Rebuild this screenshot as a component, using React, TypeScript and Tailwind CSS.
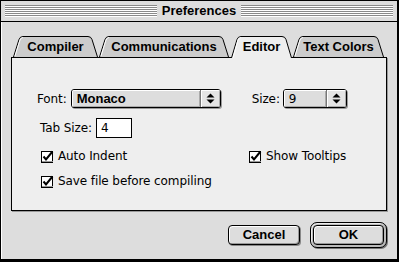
import React from "react";

const bold = "font-['Liberation_Sans',Arial,sans-serif] font-bold text-[13px] text-black";
const plain = "font-['DejaVu_Sans',Verdana,sans-serif] text-[12px] tracking-[-0.1px] text-black";

function Tab({ label, w, box, selected }: { label: string; w: number; box: string; selected?: boolean }) {
  const d = `M0.5,${selected ? 23 : 22} L6,4.5 Q7,1.5 10,1.5 L${w - 10},1.5 Q${w - 7},1.5 ${w - 6},4.5 L${w - 0.5},${selected ? 23 : 22}`;
  return (
    <div className={`relative h-[22px] flex items-center justify-center pt-[1px] ${box} ${selected ? "z-10" : ""}`}>
      <svg className="absolute left-0 top-0 overflow-visible" width={w} height={23}>
        <path d={d} fill={selected ? "#eeeeee" : "#cccccc"} stroke="none" />
        <path d={d} fill="none" stroke="#000" strokeWidth={1} />
        <path d={`M2,${selected ? 23 : 21} L7,5 Q8,2.5 10,2.5`} fill="none" stroke="#fff" strokeWidth={1} />
      </svg>
      <span className={`relative ${bold}`}>{label}</span>
    </div>
  );
}

function Arrows() {
  return (
    <svg width="9" height="11" viewBox="0 0 9 11">
      <path d="M4.5,0.5 L8.5,4.5 L0.5,4.5 Z" fill="#000" />
      <path d="M0.5,6.5 L8.5,6.5 L4.5,10.5 Z" fill="#000" />
    </svg>
  );
}

function Popup({ value, box, valueClass }: { value: string; box: string; valueClass: string }) {
  return (
    <div className={`flex h-[19px] rounded-[3px] border border-black bg-[#dddddd] shadow-[1px_1px_0_#999999] overflow-hidden ${box}`}>
      <div className="flex-1 flex items-center pl-[5px] shadow-[inset_1px_1px_0_#ffffff,inset_-1px_-1px_0_#aaaaaa]">
        <span className={valueClass}>{value}</span>
      </div>
      <div className="w-[20px] flex items-center justify-center bg-[#e4e4e4] border-l border-[#777777] shadow-[inset_1px_1px_0_#ffffff,inset_-1px_-1px_0_#aaaaaa]">
        <Arrows />
      </div>
    </div>
  );
}

function Check({ label }: { label: string }) {
  return (
    <div className="flex items-center gap-[4px]">
      <svg width="13" height="13" viewBox="0 0 13 13" className="overflow-visible">
        <rect x="0.5" y="1.5" width="11" height="11" fill="#ffffff" stroke="#000" />
        <rect x="1" y="11" width="11" height="1" fill="#999999" />
        <path d="M2.5,6.5 L5,9.5 L11.5,1.5" fill="none" stroke="#000" strokeWidth="2" />
      </svg>
      <span className={plain}>{label}</span>
    </div>
  );
}

export default function App() {
  return (
    <div className="w-[399px] h-[262px] bg-[#dddddd] border border-black border-r-2 border-b-[3px] flex flex-col shadow-[inset_1px_1px_0_#ffffff]">
      <div className="h-[21px] flex items-center gap-[5px] px-[4px] border-b border-black bg-[#dddddd]">
        <div className="flex-1 h-[12px] bg-[repeating-linear-gradient(to_bottom,#8a8a8a_0,#8a8a8a_1px,#ffffff_1px,#ffffff_2px)]" />
        <span className={bold}>Preferences</span>
        <div className="flex-1 h-[12px] bg-[repeating-linear-gradient(to_bottom,#8a8a8a_0,#8a8a8a_1px,#ffffff_1px,#ffffff_2px)]" />
      </div>

      <div className="flex-1 flex flex-col pl-[10px] pr-[9px] pt-[13px] shadow-[inset_1px_0_0_#ffffff]">
        <div className="flex items-end gap-[2px] pl-[2px] relative">
          <Tab label="Compiler" w={85} box="w-[85px]" />
          <Tab label="Communications" w={130} box="w-[130px] -ml-[1px]" />
          <Tab label="Editor" w={61} box="w-[61px]" selected />
          <Tab label="Text Colors" w={91} box="w-[91px] -ml-[1px]" />
        </div>

        <div className="h-[154px] w-[376px] bg-[#eeeeee] border border-black shadow-[1px_1px_0_#999999] flex flex-col pl-[25px] pt-[31px]">
          <div className="flex items-center">
            <span className={plain}>Font:</span>
            <Popup value="Monaco" box="w-[150px] ml-[4px]" valueClass={bold} />
            <span className={`${plain} ml-[31px]`}>Size:</span>
            <Popup value="9" box="w-[64px] ml-[3px]" valueClass={plain} />
          </div>
          <div className="flex items-center mt-[10px] ml-[3px]">
            <span className={plain}>Tab Size:</span>
            <div className="ml-[4px] w-[36px] h-[20px] bg-white border border-black flex items-center pl-[4px]">
              <span className={plain}>4</span>
            </div>
          </div>
          <div className="flex mt-[9px] ml-[4px]">
            <div className="w-[208px]">
              <Check label="Auto Indent" />
            </div>
            <Check label="Show Tooltips" />
          </div>
          <div className="mt-[7px] ml-[4px]">
            <Check label="Save file before compiling" />
          </div>
        </div>

        <div className="flex justify-end items-center mt-[11px] gap-[10px] pr-[1px]">
          <div className={`w-[72px] h-[20px] rounded-[4px] border border-black bg-[#dddddd] shadow-[inset_1px_1px_0_#ffffff,inset_-1px_-1px_0_#999999,1px_1px_0_#888888] flex items-center justify-center ${bold}`}>
            Cancel
          </div>
          <div className="w-[77px] h-[26px] rounded-[7px] border border-black bg-[#bbbbbb] p-[2px] shadow-[inset_1px_1px_0_#eeeeee,1px_1px_0_#777777]">
            <div className={`w-full h-full rounded-[4px] border border-black bg-[#dddddd] shadow-[inset_1px_1px_0_#ffffff,inset_-1px_-1px_0_#999999] flex items-center justify-center ${bold}`}>
              OK
            </div>
          </div>
        </div>
      </div>
    </div>
  );
}
